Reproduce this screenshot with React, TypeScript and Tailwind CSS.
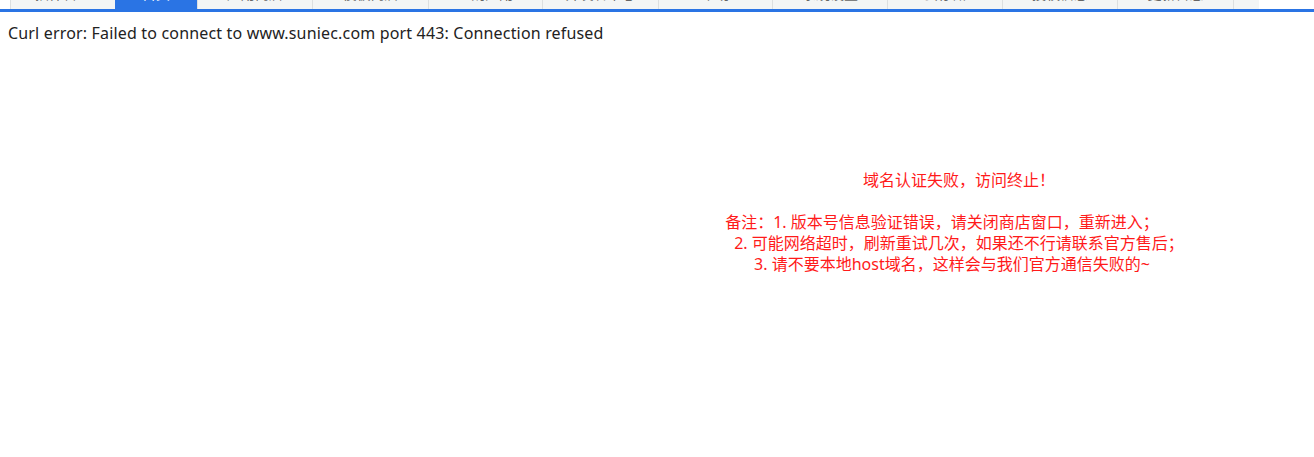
const tabs = [
  { label: "插件管理", w: "w-[105px]", active: false },
  { label: "首页", w: "w-[82px]", active: true },
  { label: "应用商店", w: "w-[115px]", active: false },
  { label: "模板商店", w: "w-[116px]", active: false },
  { label: "已购应用", w: "w-[114px]", active: false },
  { label: "开发者中心", w: "w-[116px]", active: false },
  { label: "帮助", w: "w-[114px]", active: false },
  { label: "系统设置", w: "w-[115px]", active: false },
  { label: "云存储", w: "w-[115px]", active: false },
  { label: "授权信息", w: "w-[115px]", active: false },
  { label: "更新日志", w: "w-[116px]", active: false },
  { label: "", w: "w-[26px]", active: false },
];

const App = () => {
  return (
    <div className="min-h-screen bg-white font-['Noto_Sans','Noto_Sans_CJK_SC',sans-serif]">
      <div className="flex h-[9px] overflow-hidden pl-[10px]">
        {tabs.map((t, i) => (
          <div
            key={i}
            className={
              t.active
                ? `${t.w} shrink-0 bg-[#2a74e4] text-center text-white`
                : `${t.w} shrink-0 border-l border-[#dcdfe0] bg-[#f3f5f5] text-center text-[#666]`
            }
          >
            <div className="-mt-[16px] text-[14px] leading-[20px]">{t.label}</div>
          </div>
        ))}
      </div>
      <div className="h-[3px] bg-[#2a74e4]" />

      <p className="px-2 pt-[10px] text-[16px] leading-[22px] tracking-[0.17px] text-[#222]">
        Curl error: Failed to connect to www.suniec.com port 443: Connection refused
      </p>

      <div className="mt-[126px] flex text-[16px] leading-[21px] text-[#ff1a1a]">
        <div className="w-[604px] shrink-0" />
        <div className="flex-1 text-center">
          <div>域名认证失败，访问终止！</div>
          <div className="h-[21px]" />
          <div className="pr-[34px]">备注：1. 版本号信息验证错误，请关闭商店窗口，重新进入；</div>
          <div>2. 可能网络超时，刷新重试几次，如果还不行请联系官方售后；</div>
          <div className="pr-[14px]">3. 请不要本地host域名，这样会与我们官方通信失败的~</div>
        </div>
      </div>
    </div>
  );
};

export default App;
